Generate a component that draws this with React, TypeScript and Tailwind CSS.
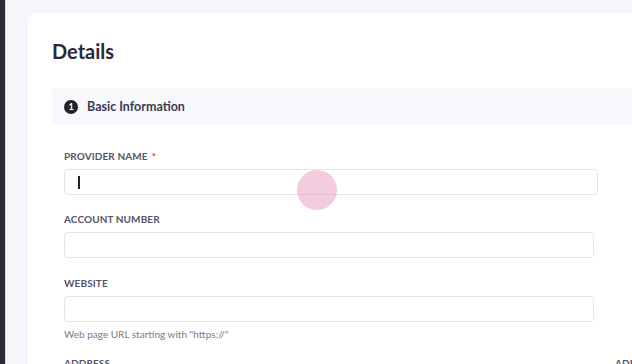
import React from "react";

const font = { fontFamily: "Lato, 'Noto Sans', sans-serif" };

function Label({ children, req }: { children: React.ReactNode; req?: boolean }) {
  return (
    <div className="h-[14px] text-[10px] leading-[14px] font-bold tracking-[0.01em] text-[#545468] uppercase">
      {children}
      {req && <span className="ml-[4px] text-[#e0334c]">*</span>}
    </div>
  );
}

export default function App() {
  return (
    <div style={font} className="relative flex h-[364px] w-[632px] overflow-hidden bg-[#f5f6fa]">
      <div className="h-full w-[5px] shrink-0 bg-[#2b2c38]" />
      <div className="h-full w-px shrink-0 bg-[#d9dae3]" />
      <div className="shrink-0 pl-[22px] pt-[14px]">
        <div className="w-[700px] rounded-[7px] bg-white pl-6 pt-[23px] pb-10">
          <h1 className="h-[28px] text-[20px] leading-[28px] font-bold text-[#2a2938]">Details</h1>
          <div className="mt-[23px] flex h-[37px] items-center bg-[#f7f8fc] pl-3">
            <div className="flex h-[14px] w-[14px] items-center justify-center rounded-full bg-[#222229] text-[9px] font-bold leading-none text-white">
              1
            </div>
            <div className="ml-[9px] text-[12.5px] font-bold text-[#3c3b52] pt-px">Basic Information</div>
          </div>
          <div className="pl-3 pt-[24px]">
            <Label req>Provider name</Label>
            <div className="mt-[6px] flex h-[26px] w-[534px] items-center rounded-[4px] border border-[#e4e3ef] pl-[13px]">
              <div className="h-[13px] w-[1.5px] bg-[#222]" />
            </div>
            <div className="mt-[17px]">
              <Label>Account number</Label>
            </div>
            <div className="mt-[6px] h-[26px] w-[530px] rounded-[4px] border border-[#e4e3ef]" />
            <div className="mt-[18px]">
              <Label>Website</Label>
            </div>
            <div className="mt-[6px] h-[26px] w-[530px] rounded-[4px] border border-[#e4e3ef]" />
            <div className="mt-[6px] h-[13px] text-[10px] leading-[13px] text-[#7a7a88]">
              Web page URL starting with "https://"
            </div>
            <div className="mt-[15px] flex">
              <div className="w-[551px]">
                <Label>Address</Label>
              </div>
              <Label>Address line 2</Label>
            </div>
          </div>
        </div>
      </div>
      <div className="absolute left-[297px] top-[170px] h-[40px] w-[40px] rounded-full bg-[#e999c0]/50" />
    </div>
  );
}
